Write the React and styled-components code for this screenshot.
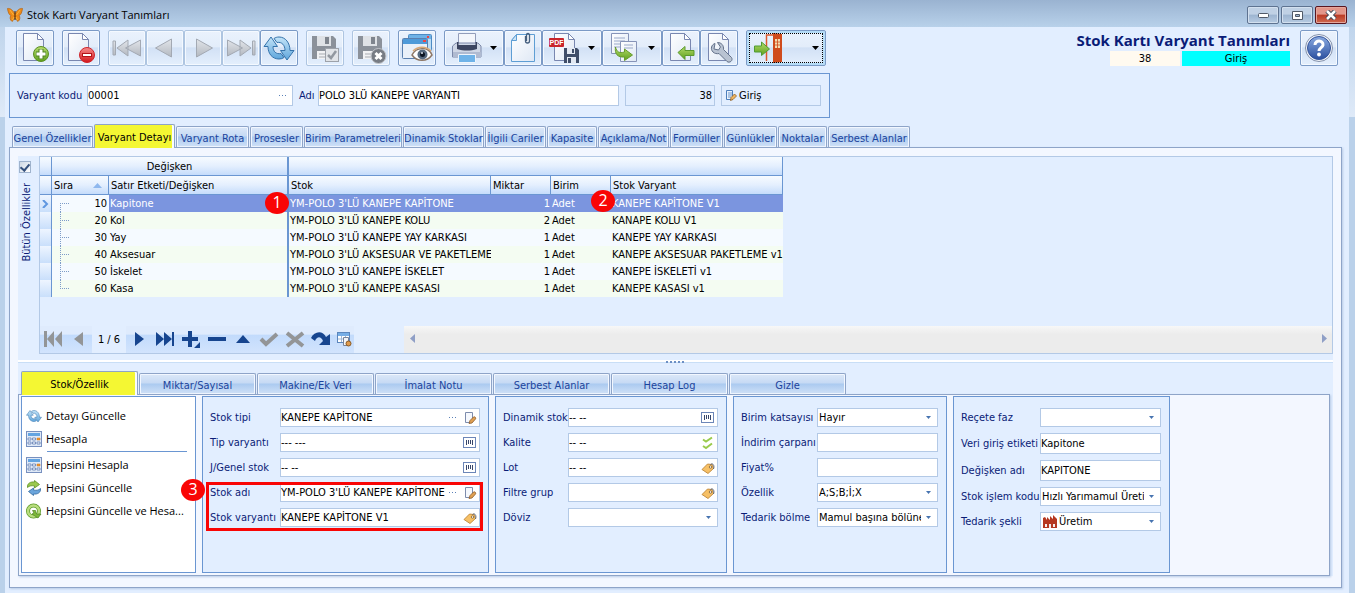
import React from "react";
import styled, { createGlobalStyle, css } from "styled-components";

const ui = `"DejaVu Sans Condensed", "DejaVu Sans", sans-serif`;
const segoe = `"Open Sans", "Noto Sans", sans-serif`;

const c = {
  body: "#e2eeff",
  page: "#f3f7ff",
  frame: "#bad1ea",
  line: "#6a96d2",
  soft: "#b3c9e6",
  tab: "#8ea4c8",
  navy: "#0a1c77",
};

const Global = createGlobalStyle`
  * { box-sizing: border-box; }
  body { margin: 0; font-family: ${ui}; font-size: 11px; line-height: 15px; color: #000; background: ${c.frame}; }
  button, input, select { font: inherit; color: inherit; margin: 0; }
  svg { display: block; flex: none; }
`;

/* ---------- window frame ---------- */
const Window = styled.div`
  min-height: 100vh;
  display: flex;
  flex-direction: column;
  background: linear-gradient(#b6cee8 0, #dfeaf8 117px, ${c.frame} 117px);
`;
const TitleBar = styled.header`
  height: 27px;
  display: flex;
  align-items: center;
  gap: 4px;
  padding: 3px 8px 0 7px;
  background: linear-gradient(#9ab3d1, #b8d1ea);
`;
const TitleText = styled.h1`
  flex: 1;
  margin: 0;
  font: 400 11px/16px ${segoe};
`;
const WinButtons = styled.div`
  display: flex;
  gap: 2px;
`;
const WinButton = styled.button`
  width: 32px;
  height: 18px;
  padding: 0;
  display: grid;
  place-items: center;
  border: 1px solid ${(p) => (p.$close ? "#5a1620" : "#5e7391")};
  border-radius: 2px;
  box-shadow: inset 0 0 0 1px ${(p) => (p.$close ? "#e5a79c" : "#d3e0ef")};
  background: ${(p) =>
    p.$close
      ? "linear-gradient(#e2968a 0 45%, #bb3a24 50%, #cf6a50)"
      : "linear-gradient(#c0d1e5 0 45%, #9db5d1 50%, #b7cbe2)"};
`;
const Body = styled.main`
  flex: 1;
  display: flex;
  flex-direction: column;
  margin: 0 6px 0 5px;
  padding: 3px 7px 5px 4px;
  background: ${c.body};
`;

/* ---------- toolbar ---------- */
const TopRow = styled.div`
  display: flex;
  align-items: flex-start;
  padding: 0 4px 0 7px;
`;
const ToolBar = styled.div`
  display: flex;
  flex: 1;
  gap: 8px;
`;
const ToolGroup = styled.div`
  display: flex;
`;
const ToolButton = styled.button`
  width: ${(p) => p.$w || 38}px;
  height: 36px;
  padding: 0 ${(p) => (p.$w ? 6 : 1)}px;
  display: flex;
  align-items: center;
  justify-content: ${(p) => (p.$w ? "space-between" : "center")};
  border: 1px solid #7b9ac6;
  border-radius: 2px;
  box-shadow: inset 0 0 0 1px #f4f9ff;
  background: linear-gradient(#eaf2fd 0, #e3edfa 46%, #d2e1f5 50%, #e4effd);
  &:disabled {
    border-color: #aec5e1;
  }
  ${(p) =>
    p.$focus &&
    css`
      box-shadow: inset 0 0 0 2px #b5dcf7;
      outline: 1px dotted #000;
      outline-offset: -4px;
    `}
`;
const Heading = styled.div`
  width: 214px;
  margin-right: 10px;
  display: grid;
  grid-template-columns: 70px 108px;
  justify-content: end;
  column-gap: 2px;
`;
const HeadingTitle = styled.h2`
  grid-column: 1 / -1;
  justify-self: end;
  margin: 0;
  font: 700 15px/21px ${segoe};
  color: ${c.navy};
  white-space: nowrap;
`;
const HeadingCell = styled.span`
  height: 15px;
  line-height: 16px;
  text-align: center;
  background: ${(p) => p.$bg};
`;

/* ---------- record header ---------- */
const Record = styled.section`
  width: 821px;
  height: 45px;
  margin-top: 7px;
  padding: 0 8px 0 7px;
  display: flex;
  align-items: center;
  border: 1px solid ${c.line};
`;
const Label = styled.label`
  color: ${c.navy};
  white-space: nowrap;
`;
const RecordLabel = styled(Label)`
  width: ${(p) => p.$w}px;
`;
const Field = styled.div`
  position: relative;
  min-width: 0;
  width: ${(p) => (p.$w ? `${p.$w}px` : "auto")};
  height: ${(p) => p.$h || 19}px;
  margin-right: ${(p) => p.$gap || 0}px;
  display: flex;
  align-items: center;
  border: 1px solid ${c.soft};
  background: ${(p) => (p.$flat ? c.body : "#fff")};
`;
const TextInput = styled.input`
  flex: 1;
  min-width: 0;
  width: 100%;
  height: 100%;
  padding: 0 ${(p) => (p.$right ? 2 : 0)}px;
  border: 0;
  outline: 0;
  background: none;
  text-align: ${(p) => (p.$right ? "right" : "left")};
`;
const Select = styled.select`
  appearance: none;
  flex: 1;
  min-width: 0;
  height: 100%;
  padding: 0 16px 0 1px;
  border: 0;
  outline: 0;
  background: none;
`;
const SelectArrow = styled.svg`
  position: absolute;
  right: 6px;
  top: 7px;
  pointer-events: none;
`;
const FieldButton = styled.button`
  width: ${(p) => (p.$narrow ? 14 : 19)}px;
  height: 17px;
  padding: 0;
  display: grid;
  place-items: center;
  border: 0;
  background: none;
  color: #5a81b8;
`;

/* ---------- main tabs ---------- */
const Tabs = styled.div`
  display: flex;
  align-items: flex-end;
  gap: ${(p) => p.$gap}px;
  height: ${(p) => p.$h}px;
  padding-left: ${(p) => p.$pad}px;
`;
const Tab = styled.button`
  width: ${(p) => p.$w}px;
  height: 21px;
  padding: 2px 0 0;
  display: grid;
  place-content: center;
  white-space: nowrap;
  color: #1c449c;
  border: 1px solid ${c.tab};
  border-bottom: 0;
  border-radius: 2px 2px 0 0;
  box-shadow: inset 0 0 0 1px #f2f7ff;
  background: linear-gradient(#dce8f8 0, #c6daf4 45%, #abcaf0 50%, #d0e1f7);
  ${(p) =>
    p.$active &&
    css`
      height: 24px;
      padding: 1px 0 0;
      margin-bottom: -1px;
      z-index: 1;
      color: #000;
      box-shadow: inset -2px 0 0 #f8fbff;
      background: #f4f733;
    `}
`;
const Page = styled.section`
  flex: 1;
  display: flex;
  flex-direction: column;
  border: 1px solid ${c.tab};
  box-shadow: 1px 1px 2px #b8cbe6;
  background: ${c.page};
  padding: 8px 8px 11px;
`;
const Content = styled.div`
  flex: 1;
  display: flex;
  flex-direction: column;
  background: ${c.body};
`;

/* ---------- grid ---------- */
const GridArea = styled.div`
  display: flex;
  height: 198px;
`;
const Side = styled.div`
  width: 21px;
  padding: 5px 0 0 1px;
  display: flex;
  flex-direction: column;
  gap: 10px;
`;
const Check = styled.input`
  appearance: none;
  width: 12px;
  height: 12px;
  margin: 0;
  border: 1px solid #9fb3cd;
  background: linear-gradient(135deg, #cfd9e5, #fff);
  display: grid;
  place-items: center;
  &:checked::after {
    content: "";
    width: 4px;
    height: 7px;
    margin-top: -2px;
    border: solid #35517d;
    border-width: 0 2px 2px 0;
    transform: rotate(40deg);
  }
`;
const SideLabel = styled.label`
  writing-mode: vertical-rl;
  transform: rotate(180deg);
  width: 15px;
  color: ${c.navy};
  text-align: right;
  white-space: nowrap;
`;
const Grid = styled.div`
  flex: 1;
  min-width: 0;
  display: flex;
  flex-direction: column;
  justify-content: space-between;
  border: 1px solid ${c.soft};
`;
const TableWrap = styled.div`
  position: relative;
  width: 743px;
`;
const Table = styled.table`
  width: 743px;
  table-layout: fixed;
  border-collapse: separate;
  border-spacing: 0;
`;
const Th = styled.th`
  height: 19px;
  padding: 1px 2px 0;
  font-weight: 400;
  line-height: 17px;
  text-align: ${(p) => (p.$center ? "center" : "left")};
  white-space: nowrap;
  border-bottom: 1px solid ${c.line};
  border-right: ${(p) => (p.$thick ? 2 : 1)}px solid ${c.line};
  background: linear-gradient(#f7fbff 0, #e4effe 50%, #c5dcfb);
`;
const SortHead = styled.span`
  display: flex;
  justify-content: space-between;
  align-items: center;
  padding-right: 4px;
`;
const Row = styled.tr`
  background: ${(p) => (p.$odd ? "#f4fcf2" : "#f5faff")};
`;
const Td = styled.td`
  height: 17px;
  padding: 1px 1px 0;
  line-height: 16px;
  white-space: nowrap;
  overflow: hidden;
  text-align: ${(p) => (p.$right ? "right" : "left")};
  border-right: ${(p) => (p.$thick ? `2px solid ${c.line}` : "0")};
  ${(p) =>
    p.$sel &&
    css`
      color: #fff;
      background: #7b95df;
    `}
`;
const SeqTd = styled.td`
  padding: 0;
`;
const Indicator = styled.td`
  padding: 0 0 0 2px;
  border-right: 1px solid ${c.line};
  background: linear-gradient(#eef5ff, #c9dffb);
`;
const SeqCell = styled.div`
  display: flex;
  justify-content: space-between;
  height: 17px;
  line-height: 18px;
  padding: 0 2px 0 8px;
`;
const Badge = styled.span`
  position: absolute;
  left: ${(p) => p.$x}px;
  top: ${(p) => p.$y}px;
  width: 24px;
  height: 22px;
  border-radius: 50%;
  background: #f90505;
  color: #fff;
  font: 16px/20px ${segoe};
  text-align: center;
`;
const NavRow = styled.div`
  display: flex;
  height: 27px;
`;
const Navigator = styled.div`
  display: flex;
  width: 314px;
  margin-right: 50px;
`;
const NavButton = styled.button`
  flex: 0 0 26px;
  padding: 0 0 2px;
  border: 0;
  display: grid;
  place-items: center;
  color: ${(p) => (p.$off ? "#939597" : "#17458f")};
  background: linear-gradient(#dfebfd 0 30%, #c2dbfc 34%, #d2e4fd);
  &:last-child {
    flex: 1 1 0;
  }
`;
const NavCount = styled.span`
  width: 34px;
  line-height: 27px;
  text-align: center;
`;
const ScrollBar = styled.div`
  flex: 1;
  display: flex;
  justify-content: space-between;
  background: linear-gradient(#f7f7f7, #ececec 30%);
`;
const ScrollButton = styled.button`
  width: 16px;
  padding: 0 0 2px;
  border: 0;
  display: grid;
  place-items: center;
  background: none;
`;

/* ---------- splitter and detail ---------- */
const Splitter = styled.div`
  height: 16px;
  padding-top: 7px;
  display: flex;
  justify-content: center;
  background: linear-gradient(transparent 6px, #fff 6px 8px, #c8def6 8px 9px, transparent 9px);
`;
const Detail = styled.section`
  flex: 1;
  display: flex;
  gap: 6px;
  margin-right: 3px;
  padding: 1px 2px 2px;
  border: 1px solid ${c.tab};
  box-shadow: 1px 1px 2px #b8cbe6;
  background: ${c.page};
`;
const Menu = styled.nav`
  width: 175px;
  padding: 7px 0 0 4px;
  border: 1px solid ${c.line};
  background: #fff;
`;
const MenuItem = styled.button`
  width: 100%;
  height: 23px;
  padding: 0;
  display: flex;
  align-items: center;
  gap: 4px;
  border: 0;
  background: none;
  font: 11px/16px ${segoe};
  white-space: nowrap;
`;
const MenuRule = styled.hr`
  height: 1px;
  margin: 1px 8px 1px 21px;
  border: 0;
  background: ${c.line};
`;
const Panel = styled.div`
  width: ${(p) => p.$w}px;
  padding: 11px 8px 0 7px;
  display: flex;
  flex-direction: column;
  gap: 6px;
  border: 1px solid ${c.line};
  background: ${c.body};
`;
const FormRow = styled.div`
  display: grid;
  grid-template-columns: ${(p) => p.$label}px 1fr;
  align-items: center;
`;
const Callout = styled.div`
  position: relative;
  display: flex;
  flex-direction: column;
  gap: 6px;
  &::after {
    content: "";
    position: absolute;
    inset: -1px -3px -4px -4px;
    border: 3px solid #f90505;
    pointer-events: none;
  }
`;

/* ---------- icons ---------- */
const Hidden = styled.svg`
  position: absolute;
`;
const Defs = () => (
  <Hidden width="0" height="0" aria-hidden="true">
    <defs>
      <linearGradient id="sheet" x1="0" y1="0" x2="1" y2="1">
        <stop offset="0" stopColor="#fff" />
        <stop offset="1" stopColor="#dfe8f5" />
      </linearGradient>
      <linearGradient id="green" x1="0" y1="0" x2="0" y2="1">
        <stop offset="0" stopColor="#b5dc6c" />
        <stop offset="1" stopColor="#5d9f1c" />
      </linearGradient>
      <linearGradient id="red" x1="0" y1="0" x2="0" y2="1">
        <stop offset="0" stopColor="#f58c8c" />
        <stop offset="1" stopColor="#d3161c" />
      </linearGradient>
      <linearGradient id="grey" x1="0" y1="0" x2="0" y2="1">
        <stop offset="0" stopColor="#e2e5ea" />
        <stop offset="1" stopColor="#b3b8c0" />
      </linearGradient>
      <linearGradient id="blue" x1="0" y1="0" x2="0" y2="1">
        <stop offset="0" stopColor="#c4e4f8" />
        <stop offset="1" stopColor="#5fa6dc" />
      </linearGradient>
      <linearGradient id="help" x1="0" y1="0" x2="0" y2="1">
        <stop offset="0" stopColor="#8aaae0" />
        <stop offset="1" stopColor="#2a4f9f" />
      </linearGradient>
    </defs>
  </Hidden>
);
const Svg = ({ s = 32, children, ...r }) => (
  <svg width={s} height={s} viewBox={`0 0 ${s} ${s}`} fill="none" aria-hidden="true" {...r}>
    {children}
  </svg>
);
const Sheet = ({ x = 4 }) => (
  <g transform={`translate(${x} 0)`}>
    <path d="M1.5 1.500h14l6 6v21h-20z" fill="url(#sheet)" stroke="#7987b0" />
    <path d="M15.500 1.500v6h6z" fill="#fff" stroke="#7987b0" strokeLinejoin="round" />
  </g>
);
const AddIcon = () => (
  <Svg>
    <Sheet x={3} />
    <circle cx="22" cy="22" r="7.500" fill="url(#green)" stroke="#5b8f24" />
    <path d="M22 17v10M17 22h10" stroke="#4f8320" strokeWidth="5" />
    <path d="M22 17.500v9M17.500 22h9" stroke="#fff" strokeWidth="3" />
  </Svg>
);
const RemoveIcon = () => (
  <Svg>
    <Sheet x={2} />
    <circle cx="22" cy="23" r="7.500" fill="url(#red)" stroke="#d0242a" />
    <rect x="17.500" y="21.500" width="9" height="3" fill="#fff" stroke="#b3141a" />
  </Svg>
);
const grey = { fill: "url(#grey)", stroke: "#a3a9b3" };
const FirstIcon = () => (
  <Svg>
    <path d="M2 9h2.500v14H2z M17 8v16L6 16z M29.500 8v16l-15-8z" {...grey} />
  </Svg>
);
const PrevIcon = () => (
  <Svg>
    <path d="M22.500 7v18l-16-9z" {...grey} />
  </Svg>
);
const NextIcon = () => (
  <Svg>
    <path d="M9.500 7v18l16-9z" {...grey} />
  </Svg>
);
const LastIcon = () => (
  <Svg>
    <path d="M30 9h-2.500v14H30z M15 8v16l11-8z M2.500 8v16l15-8z" {...grey} />
  </Svg>
);
const RefreshIcon = ({ size = 32 }) => (
  <svg width={size} height={size} viewBox="0 0 32 32" aria-hidden="true">
    <g fill="url(#blue)" stroke="#3573ab" strokeLinejoin="round">
      <path d="M8 5 1 14.500h4C5 22 9.500 27 16 27c2 0 3.500-.5 5-1.500l-3-4c-5 1-8-2-8-7h4.500z" />
      <path d="M24 28l7-9.500h-4C27 11 22.500 5 16 5c-2 0-3.500.5-5 1.500l3 4c5-1 8 3 8 8h-4.500z" />
    </g>
  </svg>
);
const Disk = () => (
  <>
    <path d="M3 4h21l3 3v20H3z" fill="#8b919a" />
    <path d="M8 4h14v10H8z" fill="#dfe2e6" />
    <path d="M16 5h4v7h-4z" fill="#7f858e" />
    <path d="M8 19h14v8H8z" fill="#f1f2f4" />
    <path d="M10 22h8M10 25h8" stroke="#a7abb1" />
  </>
);
const SaveOkIcon = () => (
  <Svg>
    <Disk />
    <rect x="16.500" y="16.500" width="13" height="13" fill="#e1e4e8" stroke="#9da2aa" />
    <path d="m19 23 3 3 5-7" stroke="#9298a0" strokeWidth="2.500" />
  </Svg>
);
const SaveCancelIcon = () => (
  <Svg>
    <Disk />
    <circle cx="23.500" cy="24" r="7.500" fill="#777c84" stroke="#c3c6cb" />
    <path d="m20.500 21 6 6m0-6-6 6" stroke="#fff" strokeWidth="3" />
  </Svg>
);
const PreviewIcon = () => (
  <Svg>
    <rect x="7.500" y="2.500" width="23" height="16" rx="1" fill="#bcdcf5" stroke="#4d8bc4" />
    <path d="M8 3h22v4H8z" fill="#6fb2e6" />
    <path d="M26 5h2" stroke="#e44" strokeWidth="2" />
    <rect x="1.500" y="6.500" width="25" height="20" rx="1" fill="#e9f0f9" stroke="#5a7fae" />
    <path d="M2 7h24v5H2z" fill="#4e9ad9" />
    <path d="M22 9h3" stroke="#e44" strokeWidth="2" />
    <path d="M11 23c4-8 16-9 20 0-5 7-15 7-20 0z" fill="#fff" stroke="#8d7766" strokeWidth="1.500" />
    <circle cx="21.500" cy="22.500" r="5" fill="#56697f" />
    <circle cx="21.500" cy="22.500" r="2.500" fill="#0c1522" />
    <path d="M20 21h2" stroke="#dfe8f3" strokeWidth="1.500" />
    <path d="M12 19c5-5 13-5 18 0" stroke="#d9a877" strokeWidth="1.500" />
  </Svg>
);
const PrintIcon = () => (
  <Svg>
    <path d="M7.500 1.500h17V14h-17z" fill="#f3f6fb" stroke="#929dba" />
    <path d="M1.500 14 5 11h22l3 3v11h-28.500z" fill="#cfd7e6" stroke="#7c89aa" />
    <path d="M6 10h1.500v3h17v-3H26v7c-7 2-13 2-20 0z" fill="#3c4560" />
    <path d="M2 20h28v5H2z" fill="#b0bbd1" />
    <path d="M7.500 22.500h17v8h-17z" fill="#6fb3e8" stroke="#eef4fb" />
  </Svg>
);
const ClipIcon = () => (
  <Svg>
    <path d="M4.500 8.500 9.500 2.500h18v27h-23z" fill="url(#sheet)" stroke="#5e9ed4" />
    <path d="M4.500 8.500h5v-6z" fill="#cde3f6" stroke="#5e9ed4" />
    <path d="M18.500 4v5a2 2 0 0 0 4 0V3a1.500 1.500 0 0 0-3 0v6" stroke="#47607f" strokeWidth="1.300" />
  </Svg>
);
const PdfIcon = () => (
  <Svg>
    <Sheet />
    <rect x="0" y="6" width="15" height="9" rx="1" fill="#c9252b" />
    <text x="7.500" y="13" textAnchor="middle" fontSize="7" fontWeight="700" fill="#fff" fontFamily="Liberation Sans, sans-serif">
      PDF
    </text>
    <path d="M15 16h13l2 2v13H15z" fill="#3f4d68" />
    <path d="M18 16h8v6h-8zM18 25h9v6h-9z" fill="#e3e9f2" />
    <path d="M23 17h2v4h-2zM19 26h3v5h-3z" fill="#3f4d68" />
  </Svg>
);
const CopyIcon = () => (
  <Svg>
    <path d="M2.500 1.500h17v20h-17z" fill="url(#sheet)" stroke="#8794b8" />
    <path d="M5 6h11M5 9h11M5 12h11M5 15h7" stroke="#9aa9c9" />
    <path d="M11.500 9.500h16v20h-16z" fill="url(#sheet)" stroke="#8794b8" />
    <path d="M15 13h9M15 16h9" stroke="#9aa9c9" />
    <path d="M6.500 15c1 5 4 6.500 9 5v-3l8 6-8 5.500v-3.500c-7 .5-10-3-9-10z" fill="url(#green)" stroke="#669c2c" />
  </Svg>
);
const ImportIcon = () => (
  <Svg>
    <Sheet />
    <path d="M13 20.500 20 14.500v4h9v5h-9v4z" fill="url(#green)" stroke="#5b9a2e" />
  </Svg>
);
const ToolsIcon = () => (
  <Svg>
    <Sheet />
    <path d="M12 11.500c-3.500 1-5 5.500-2 8.500 1.500 1.500 4 2 6 1.500l8 8c2.500 2 6.500-1 4.500-4l-8-8c.5-4-2-7-6-7l3 4.500-2 3-4.500-1z" fill="#b9c3d2" stroke="#64728a" />
  </Svg>
);
const ExitIcon = () => (
  <Svg>
    <path d="M13.500 29V3H20" stroke="#dd5a2c" strokeWidth="1.500" />
    <path d="m20 1 9 1v28l-9 1z" fill="#cf4b1c" />
    <path d="M22 7h5v9h-5z" fill="#f4dcb0" />
    <path d="M24.500 7v9M22 10h5M22 13h5" stroke="#cf4b1c" strokeWidth=".8" />
    <path d="M1.500 14h7v-4l8 7-8 6.500V20h-7z" fill="url(#green)" stroke="#4f9c33" />
  </Svg>
);
const HelpIcon = () => (
  <Svg>
    <circle cx="16" cy="16" r="13.500" fill="#f3f6fb" stroke="#8391ab" />
    <circle cx="16" cy="16" r="11.500" fill="url(#help)" stroke="#33549b" />
    <path d="M12 13c0-5.500 8.500-5 8 0-.3 2.500-4 3-4 6" stroke="#fff" strokeWidth="3" />
    <circle cx="16" cy="22.500" r="1.900" fill="#fff" />
  </Svg>
);
const Butterfly = () => (
  <Svg s={16}>
    <path d="M8 7C6 3 3 1 .5 1.500 1 5 2 8 4 8.500 2.500 10 3 13 5 14.500c1.500-1 2.500-3 3-5 .5 2 1.500 4 3 5 2-1.500 2.500-4.500 1-6 2-.5 3-3.500 3.500-7C13 1 10 3 8 7z" fill="#ee8a18" stroke="#b3610f" strokeWidth=".7" />
    <path d="M8 4v9" stroke="#3b2008" />
    <path d="m3 3 3.500 5M13 3 9.500 8M5.500 13l1.500-3M10.500 13 9 10" stroke="#f8b53c" />
  </Svg>
);
const Caret = () => (
  <svg width="7" height="4" viewBox="0 0 7 4" aria-hidden="true">
    <path d="M0 0h7L3.500 4z" fill="#000" />
  </svg>
);
const Dots = () => (
  <svg width="8" height="2" viewBox="0 0 8 2" aria-hidden="true">
    <path d="M0 0h1v1H0zM3 0h1v1H3zM6 0h1v1H6z" fill="#5a81b8" />
  </svg>
);
const EditIcon = () => (
  <Svg s={14}>
    <path d="M2.500 1.500h7v9l-2 1h-5z" fill="#f5f8fd" stroke="#7d8cad" />
    <path d="m6 12.500 1-3 3.500-3.500c1-1 3 1 2 2L9 12z" fill="#e0a052" stroke="#8a5a2b" strokeWidth=".8" />
  </Svg>
);
const BarIcon = () => (
  <Svg s={14}>
    <rect x=".5" y="1.500" width="12" height="10" fill="#fff" stroke="#6c86b8" />
    <path d="M3.500 4v5M5.500 4v4M7.500 4v4M9.500 4v5" stroke="#38466a" />
  </Svg>
);
const TagIcon = () => (
  <Svg s={14}>
    <path d="M1 8.500 6.500 3l4.500.5 1.500 4L7 12.500z" fill="#f6c066" stroke="#b87c2c" strokeWidth=".8" />
    <circle cx="9.500" cy="6" r="1.200" fill="#fff" stroke="#6b4a20" strokeWidth=".7" />
    <path d="M9.500 3.500c2-2 4.500 1 3 4.500" stroke="#5f6674" />
  </Svg>
);
const ChecksIcon = () => (
  <Svg s={14}>
    <path d="m2 3.500 3 2 6-4M2 10l3 2 6-4.500" stroke="#9acb4c" strokeWidth="2" />
  </Svg>
);
const NoteIcon = () => (
  <Svg s={14}>
    <path d="M2.500 1.500h6v9h-6z" fill="#eaf2fc" stroke="#4d7fbc" />
    <path d="M4 4h4M4 6h4M4 8h3" stroke="#6d97cc" />
    <path d="m6.500 11.500.5-3 3.500-3.500 2 2L9 10.500z" fill="#efb560" stroke="#8d6024" strokeWidth=".8" />
  </Svg>
);
const FactoryIcon = () => (
  <Svg s={14}>
    <path d="M0 13V3l2-1 2 3V2l3 3V1l3 3V0l4 4v9z" fill="#b5371f" />
    <path d="M2 9h2v3H2zM10 9h2v3h-2zM6 9h2v4H6z" fill="#f4eeec" />
  </Svg>
);
const CalcIcon = () => (
  <Svg s={16}>
    <rect x=".5" y=".5" width="15" height="15" fill="#dfe9f7" stroke="#7890bf" />
    <path d="M2 2h12v3H2z" fill="#63a4e2" />
    <path d="M2 7h3v2H2zM6.500 7h3v2h-3zM2 11h3v2H2zM6.500 11h3v2h-3zM11 11h3v2h-3z" fill="#fff" stroke="#5f7cb3" strokeWidth=".8" />
    <path d="M11 7h3v2h-3z" fill="#f39a35" stroke="#c77318" strokeWidth=".5" />
  </Svg>
);
const SwapIcon = () => (
  <Svg s={16}>
    <path d="M1.500 7.500C1 3 5 1.500 8.500 2V.5l5 4-5 3.500V6C6 5.500 3.500 5.500 1.500 7.500z" fill="#9ac84e" stroke="#5d8f27" strokeWidth=".8" />
    <path d="M14.500 8.500c.5 4.500-3.500 6-7 5.500v1.500l-5-4 5-3.500v2c2.500.5 5 .5 7-1.500z" fill="#6ba5dc" stroke="#34699f" strokeWidth=".8" />
  </Svg>
);
const CycleIcon = () => (
  <Svg s={16}>
    <circle cx="7.500" cy="8" r="5.500" stroke="#5c9a28" strokeWidth="4" />
    <circle cx="7.500" cy="8" r="5.500" stroke="#b9dd7e" strokeWidth="2.500" />
    <path d="M6.500 7.500h3l1 3.500h4.500l-3 4-6-4 2-1z" fill="#7db83a" stroke="#4e8220" strokeWidth=".7" />
  </Svg>
);
const NavIcon = ({ d, stroke }) => (
  <Svg s={20}>
    {stroke ? <path d={d} stroke="currentColor" strokeWidth="4" /> : <path d={d} fill="currentColor" />}
  </Svg>
);
const FilterGridIcon = () => (
  <Svg s={16}>
    <rect x="1.500" y="1.500" width="12" height="10" fill="#fff" stroke="#5b86bd" />
    <path d="M2 2h11v3H2z" fill="#77aee6" />
    <path d="M2 8h11M5.500 5v6M9.500 5v6" stroke="#9fb8d8" />
    <path d="M7.500 6.500h5v8h-5z" fill="#f2f4f8" stroke="#78839a" />
    <circle cx="12.500" cy="12.500" r="2.500" fill="#e09a4c" stroke="#8c5a22" />
  </Svg>
);

/* ---------- data ---------- */
const mainTabs = [
  ["Genel Özellikler", 81],
  ["Varyant Detayı", 81],
  ["Varyant Rota", 73],
  ["Prosesler", 53],
  ["Birim Parametreleri", 98],
  ["Dinamik Stoklar", 81],
  ["İlgili Cariler", 61],
  ["Kapasite", 50],
  ["Açıklama/Not", 71],
  ["Formüller", 53],
  ["Günlükler", 53],
  ["Noktalar", 49],
  ["Serbest Alanlar", 82],
];
const detailTabs = ["Stok/Özellik", "Miktar/Sayısal", "Makine/Ek Veri", "İmalat Notu", "Serbest Alanlar", "Hesap Log", "Gizle"];
const rows = [
  [10, "Kapitone", "YM-POLO 3'LÜ KANEPE KAPİTONE", 1, "Adet", "KANEPE KAPİTONE V1"],
  [20, "Kol", "YM-POLO 3'LÜ KANEPE KOLU", 2, "Adet", "KANAPE KOLU V1"],
  [30, "Yay", "YM-POLO 3'LÜ KANEPE YAY KARKASI", 1, "Adet", "KANEPE YAY KARKASI"],
  [40, "Aksesuar", "YM-POLO 3'LÜ AKSESUAR VE PAKETLEME", 1, "Adet", "KANEPE AKSESUAR PAKETLEME v1"],
  [50, "İskelet", "YM-POLO 3'LÜ KANEPE İSKELET", 1, "Adet", "KANEPE İSKELETİ v1"],
  [60, "Kasa", "YM-POLO 3'LÜ KANEPE KASASI", 1, "Adet", "KANEPE KASASI v1"],
];

const fieldIcons = { edit: EditIcon, bar: BarIcon, tag: TagIcon, checks: ChecksIcon };

function FormField({ id, label, labelWidth, value = "", dots, icon, select, lead, tall }) {
  const Icon = fieldIcons[icon];
  return (
    <FormRow $label={labelWidth}>
      <Label htmlFor={id}>{label}</Label>
      <Field $h={tall ? 21 : 19}>
        {lead}
        {select ? (
          <>
            <Select id={id} defaultValue={value}>
              <option>{value}</option>
            </Select>
            <SelectArrow width="5" height="3" viewBox="0 0 5 3" aria-hidden="true">
              <path d="M0 0h5L2.500 3z" fill="#4774b0" />
            </SelectArrow>
          </>
        ) : (
          <TextInput id={id} defaultValue={value} />
        )}
        {dots && (
          <FieldButton $narrow aria-label="Seç">
            <Dots />
          </FieldButton>
        )}
        {Icon && (
          <FieldButton aria-label="Aç">
            <Icon />
          </FieldButton>
        )}
      </Field>
    </FormRow>
  );
}

const Lead = styled.span`
  padding: 0 1px 0 2px;
`;

export default function App() {
  return (
    <Window>
      <Global />
      <Defs />
      <TitleBar>
        <Butterfly />
        <TitleText>Stok Kartı Varyant Tanımları</TitleText>
        <WinButtons>
          <WinButton aria-label="Küçült">
            <svg width="11" height="5" viewBox="0 0 11 5">
              <rect x=".5" y=".5" width="10" height="4" rx="1" fill="#fff" stroke="#515a68" />
            </svg>
          </WinButton>
          <WinButton aria-label="Büyüt">
            <svg width="11" height="9" viewBox="0 0 11 9">
              <path d="M.5.5h10v8H.5zM3.500 3.500v2h4v-2z" fill="#fff" stroke="#515a68" fillRule="evenodd" />
            </svg>
          </WinButton>
          <WinButton $close aria-label="Kapat">
            <svg width="12" height="10" viewBox="0 0 12 10">
              <path d="m2 1 8 8m0-8L2 9" stroke="#3c4656" strokeWidth="4.500" />
              <path d="m2 1 8 8m0-8L2 9" stroke="#fff" strokeWidth="2.500" />
            </svg>
          </WinButton>
        </WinButtons>
      </TitleBar>

      <Body>
        <TopRow>
          <ToolBar>
            <ToolButton aria-label="Yeni"><AddIcon /></ToolButton>
            <ToolButton aria-label="Sil"><RemoveIcon /></ToolButton>
            <ToolGroup>
              <ToolButton disabled aria-label="İlk"><FirstIcon /></ToolButton>
              <ToolButton disabled aria-label="Önceki"><PrevIcon /></ToolButton>
              <ToolButton disabled aria-label="Sonraki"><NextIcon /></ToolButton>
              <ToolButton disabled aria-label="Son"><LastIcon /></ToolButton>
              <ToolButton aria-label="Yenile"><RefreshIcon /></ToolButton>
            </ToolGroup>
            <ToolButton disabled aria-label="Kaydet"><SaveOkIcon /></ToolButton>
            <ToolButton disabled aria-label="Vazgeç"><SaveCancelIcon /></ToolButton>
            <ToolButton aria-label="Önizle"><PreviewIcon /></ToolButton>
            <ToolGroup>
              <ToolButton $w={60} aria-label="Yazdır"><PrintIcon /><Caret /></ToolButton>
              <ToolButton aria-label="Ek"><ClipIcon /></ToolButton>
              <ToolButton $w={60} aria-label="PDF kaydet"><PdfIcon /><Caret /></ToolButton>
              <ToolButton $w={60} aria-label="Kopyala"><CopyIcon /><Caret /></ToolButton>
              <ToolButton aria-label="Aktar"><ImportIcon /></ToolButton>
              <ToolButton aria-label="Araçlar"><ToolsIcon /></ToolButton>
            </ToolGroup>
            <ToolButton $w={80} $focus aria-label="Çıkış"><ExitIcon /><Caret /></ToolButton>
          </ToolBar>
          <Heading>
            <HeadingTitle>Stok Kartı Varyant Tanımları</HeadingTitle>
            <HeadingCell $bg="#fffaf0">38</HeadingCell>
            <HeadingCell $bg="#00ffff">Giriş</HeadingCell>
          </Heading>
          <ToolButton aria-label="Yardım"><HelpIcon /></ToolButton>
        </TopRow>

        <Record>
          <RecordLabel $w={70} htmlFor="kod">Varyant kodu</RecordLabel>
          <Field $w={206} $h={21} $gap={6}>
            <TextInput id="kod" defaultValue="00001" />
            <FieldButton aria-label="Seç"><Dots /></FieldButton>
          </Field>
          <RecordLabel $w={19} htmlFor="adi">Adı</RecordLabel>
          <Field $w={301} $h={21} $gap={6}>
            <TextInput id="adi" defaultValue="POLO 3LÜ KANEPE VARYANTI" />
          </Field>
          <Field $w={90} $h={21} $gap={6} $flat>
            <TextInput $right readOnly aria-label="Kayıt no" value="38" />
          </Field>
          <Field $w={100} $h={21} $flat>
            <Lead><NoteIcon /></Lead>
            <TextInput readOnly aria-label="Durum" value="Giriş" />
          </Field>
        </Record>

        <Tabs $gap={1} $h={29} $pad={3} role="tablist">
          {mainTabs.map(([t, w], i) => (
            <Tab key={t} $w={w} $active={i === 1} role="tab" aria-selected={i === 1}>
              {t}
            </Tab>
          ))}
        </Tabs>

        <Page>
          <Content>
            <GridArea>
              <Side>
                <Check type="checkbox" id="hepsi" defaultChecked />
                <SideLabel htmlFor="hepsi">Bütün Özellikler</SideLabel>
              </Side>
              <Grid>
                <TableWrap>
                  <Table>
                    <colgroup>
                      {[12, 57, 180, 202, 60, 60, 172].map((w, i) => (
                        <col key={i} width={w} />
                      ))}
                    </colgroup>
                    <thead>
                      <tr>
                        <Th />
                        <Th colSpan={2} $center $thick>Değişken</Th>
                        <Th colSpan={4} />
                      </tr>
                      <tr>
                        <Th />
                        <Th>
                          <SortHead>
                            Sıra
                            <svg width="9" height="5" viewBox="0 0 9 5" aria-hidden="true">
                              <path d="M4.500 0 9 5H0z" fill="#8fb8ee" />
                            </svg>
                          </SortHead>
                        </Th>
                        <Th $thick>Satır Etketi/Değişken</Th>
                        <Th>Stok</Th>
                        <Th>Miktar</Th>
                        <Th>Birim</Th>
                        <Th>Stok Varyant</Th>
                      </tr>
                    </thead>
                    <tbody>
                      {rows.map((r, i) => {
                        const sel = i === 0;
                        const last = i === rows.length - 1;
                        return (
                          <Row key={r[0]} $odd={i % 2 === 1}>
                            <Indicator>
                              {sel && (
                                <svg width="7" height="8" viewBox="0 0 7 8" aria-hidden="true">
                                  <path d="m1 0 4 4-4 4" fill="none" stroke="#5f97e0" strokeWidth="2" />
                                </svg>
                              )}
                            </Indicator>
                            <SeqTd>
                              <SeqCell>
                                <svg width="10" height="17" viewBox="0 0 10 17" aria-hidden="true">
                                  <path
                                    d={`M.5 ${sel ? 8 : 0}V${last ? 8 : 17}M0 8.500h9`}
                                    stroke="#7d9cc8"
                                    strokeDasharray="1 1"
                                  />
                                </svg>
                                {r[0]}
                              </SeqCell>
                            </SeqTd>
                            <Td $sel={sel} $thick>{r[1]}</Td>
                            <Td $sel={sel}>{r[2]}</Td>
                            <Td $sel={sel} $right>{r[3]}</Td>
                            <Td $sel={sel}>{r[4]}</Td>
                            <Td $sel={sel}>{r[5]}</Td>
                          </Row>
                        );
                      })}
                    </tbody>
                  </Table>
                  <Badge $x={225} $y={35}>1</Badge>
                  <Badge $x={551} $y={33}>2</Badge>
                </TableWrap>
                <NavRow>
                  <Navigator>
                    <NavButton $off aria-label="İlk satır"><NavIcon d="M1 2h3v16H1zM11 2v16L4 10zM19 2v16l-7-8z" /></NavButton>
                    <NavButton $off aria-label="Önceki satır"><NavIcon d="M14 3v14l-9-7z" /></NavButton>
                    <NavCount>1 / 6</NavCount>
                    <NavButton aria-label="Sonraki satır"><NavIcon d="M6 3v14l9-7z" /></NavButton>
                    <NavButton aria-label="Son satır"><NavIcon d="M19 3h-2v14h2zM1 3v14l8-7zM9 3v14l8-7z" /></NavButton>
                    <NavButton aria-label="Ekle"><NavIcon d="M7 2h4v6h6v4h-6v6H7v-6H1V8h6zM19 13v6h-6z" /></NavButton>
                    <NavButton aria-label="Çıkar"><NavIcon d="M1 8h18v4H1z" /></NavButton>
                    <NavButton aria-label="Yukarı"><NavIcon d="M10 6l7 8H3z" /></NavButton>
                    <NavButton $off aria-label="Onayla"><NavIcon stroke d="m2 10 5 5L18 5" /></NavButton>
                    <NavButton $off aria-label="İptal"><NavIcon stroke d="m2 4 16 13M18 4 2 17" /></NavButton>
                    <NavButton aria-label="Yenile"><NavIcon d="M0 9C3 2 12 1 15 8l4-3v11H8l4-4C10 7 6 7 4 12z" /></NavButton>
                    <NavButton aria-label="Filtre"><FilterGridIcon /></NavButton>
                  </Navigator>
                  <ScrollBar>
                    <ScrollButton aria-label="Sola kaydır">
                      <svg width="5" height="9" viewBox="0 0 5 9"><path d="M5 0v9L0 4.500z" fill="#8f9fc6" /></svg>
                    </ScrollButton>
                    <ScrollButton aria-label="Sağa kaydır">
                      <svg width="5" height="9" viewBox="0 0 5 9"><path d="M0 0v9l5-4.500z" fill="#8f9fc6" /></svg>
                    </ScrollButton>
                  </ScrollBar>
                </NavRow>
              </Grid>
            </GridArea>

            <Splitter role="separator">
              <svg width="19" height="3" viewBox="0 0 19 3" aria-hidden="true">
                <path d="M0 1h2M4 1h2M8 1h2M12 1h2M16 1h2" stroke="#6c8fc4" strokeWidth="2" />
              </svg>
            </Splitter>

            <Tabs $gap={1} $h={24} $pad={3} role="tablist">
              {detailTabs.map((t, i) => (
                <Tab key={t} $w={117} $active={i === 0} role="tab" aria-selected={i === 0}>
                  {t}
                </Tab>
              ))}
            </Tabs>

            <Detail>
              <Menu>
                <MenuItem><RefreshIcon size={16} />Detayı Güncelle</MenuItem>
                <MenuItem><CalcIcon />Hesapla</MenuItem>
                <MenuRule />
                <MenuItem><CalcIcon />Hepsini Hesapla</MenuItem>
                <MenuItem><SwapIcon />Hepsini Güncelle</MenuItem>
                <MenuItem><CycleIcon />Hepsini Güncelle ve Hesa...</MenuItem>
              </Menu>
              <Panel $w={287}>
                <FormField id="f1" labelWidth={70} label="Stok tipi" value="KANEPE KAPİTONE" dots icon="edit" />
                <FormField id="f2" labelWidth={70} label="Tip varyantı" value="--- ---" icon="bar" />
                <FormField id="f3" labelWidth={70} label="J/Genel stok" value="-- --" icon="bar" />
                <Callout>
                  <FormField id="f4" labelWidth={70} label="Stok adı" value="YM-POLO 3'LÜ KANEPE KAPİTONE" dots icon="edit" />
                  <FormField id="f5" labelWidth={70} label="Stok varyantı" value="KANEPE KAPİTONE V1" icon="tag" />
                  <Badge $x={-29} $y={-4}>3</Badge>
                </Callout>
              </Panel>
              <Panel $w={232}>
                <FormField id="f6" labelWidth={65} label="Dinamik stok" value="-- --" icon="bar" />
                <FormField id="f7" labelWidth={65} label="Kalite" value="-- --" icon="checks" />
                <FormField id="f8" labelWidth={65} label="Lot" value="-- --" icon="tag" />
                <FormField id="f9" labelWidth={65} label="Filtre grup" icon="tag" />
                <FormField id="f10" labelWidth={65} label="Döviz" select />
              </Panel>
              <Panel $w={214}>
                <FormField id="f11" labelWidth={76} label="Birim katsayısı" value="Hayır" select />
                <FormField id="f12" labelWidth={76} label="İndirim çarpanı" />
                <FormField id="f13" labelWidth={76} label="Fiyat%" />
                <FormField id="f14" labelWidth={76} label="Özellik" value="A;S;B;İ;X" select />
                <FormField id="f15" labelWidth={76} label="Tedarik bölme" value="Mamul başına bölüne" select />
              </Panel>
              <Panel $w={217}>
                <FormField id="f16" labelWidth={79} label="Reçete faz" select />
                <FormField id="f17" labelWidth={79} label="Veri giriş etiketi" value="Kapitone" tall />
                <FormField id="f18" labelWidth={79} label="Değişken adı" value="KAPITONE" tall />
                <FormField id="f19" labelWidth={79} label="Stok işlem kodu" value="Hızlı Yarımamul Üretim" select />
                <FormField id="f20" labelWidth={79} label="Tedarik şekli" value="Üretim" select lead={<Lead><FactoryIcon /></Lead>} />
              </Panel>
            </Detail>
          </Content>
        </Page>
      </Body>
    </Window>
  );
}
